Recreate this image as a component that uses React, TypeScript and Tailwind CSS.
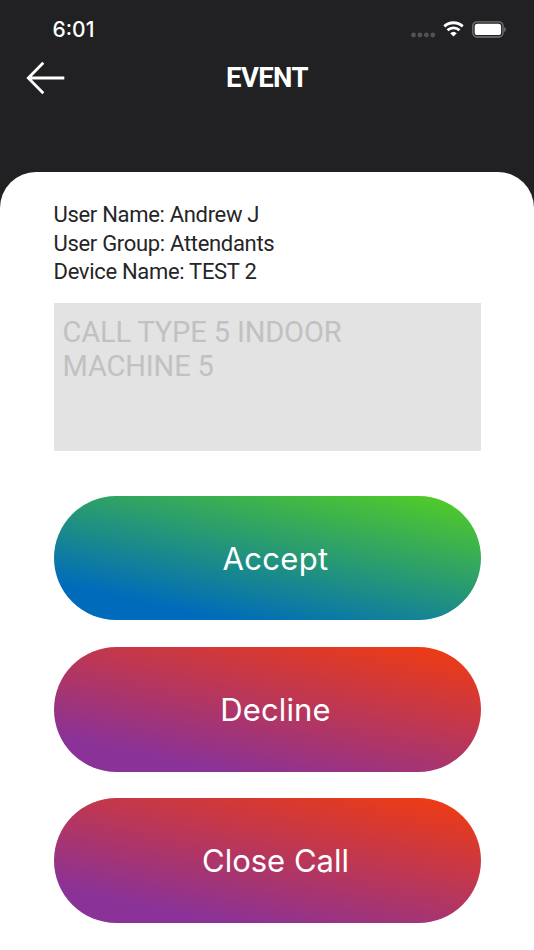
const details = [
  { label: "User Name", value: "Andrew J" },
  { label: "User Group", value: "Attendants" },
  { label: "Device Name", value: "TEST 2" },
];

const CALL_BG =
  "bg-[linear-gradient(12deg,#8a3297_17%,#eb3b17_93%)]";

const actions = [
  {
    label: "Accept",
    bg: "bg-[linear-gradient(12deg,#006bbb_17%,#4fc82c_93%)]",
    text: "tracking-[0.3px]",
  },
  { label: "Decline", bg: CALL_BG, text: "tracking-[0.1px]" },
  { label: "Close Call", bg: CALL_BG, text: "tracking-[0px]" },
];

function StatusBar() {
  return (
    <div className="flex h-[58px] items-center justify-between pl-[52.5px] pr-[27px] text-white">
      <span className="pt-px text-[21px] font-medium leading-none">6:01</span>
      <div className="flex items-center">
        <svg width="26" height="6" viewBox="0 0 26 6" className="mt-[11px]" fill="#525254">
          <circle cx="2.5" cy="3" r="2.4" />
          <circle cx="8.9" cy="3" r="2.4" />
          <circle cx="15.4" cy="3" r="2.4" />
          <circle cx="21.8" cy="3" r="2.4" />
        </svg>
        <svg width="21" height="16" viewBox="0 0 20 16" className="ml-[6px]" fill="none" stroke="white">
          <path d="M.8 5.3C6 .6 14 .6 19.2 5.3" strokeWidth="2.9" />
          <path d="M4 9.2C7.4 6 12.6 6 16 9.2" strokeWidth="2.8" />
          <path d="M6.7 12.3Q10 9.1 13.3 12.3L10 15.6Z" fill="white" stroke="none" />
        </svg>
        <svg width="35" height="17" viewBox="0 0 35 17" className="ml-[8px]">
          <rect x="0.8" y="0.8" width="30.2" height="15.2" rx="4.2" fill="none" stroke="#77777a" strokeWidth="1.3" />
          <rect x="2.7" y="2.7" width="26.4" height="11.4" rx="2.6" fill="white" />
          <path d="M32.2 6v5c2.1-.8 2.1-4.2 0-5Z" fill="#77777a" />
        </svg>
      </div>
    </div>
  );
}

export default function App() {
  return (
    <div className="flex h-[950px] w-[534px] flex-col overflow-hidden bg-[#212123] font-['Inter',sans-serif]">
      <StatusBar />

      <header className="grid h-[114px] grid-cols-[100px_1fr_100px] items-start">
        <button aria-label="Back" className="pl-[26px] pt-[3px]">
          <svg width="40" height="34" viewBox="0 0 40 34" fill="none" stroke="white" strokeWidth="2.8">
            <path d="M17.3 1.8 2.3 17l15 15.2M2.3 17h36" />
          </svg>
        </button>
        <h1 className="pt-[4px] text-center font-['Roboto',sans-serif] text-[27.5px] font-bold leading-[32px] tracking-[-0.6px] text-white">
          EVENT
        </h1>
      </header>

      <main className="flex-1 rounded-t-[36px] bg-white px-[53.5px] pt-[29px]">
        <div className="font-['Roboto',sans-serif] text-[22px] leading-[28.7px] tracking-[-0.31px] text-[#252527]">
          {details.map((item) => (
            <p key={item.label}>
              {item.label}: {item.value}
            </p>
          ))}
        </div>

        <div className="mt-[16px] h-[148px] bg-[#e3e3e3] px-[9px] pt-[13px] font-['Roboto',sans-serif] text-[29px] leading-[33.7px] tracking-[-0.14px] text-[#c1c1c1]">
          <p className="w-[300px]">CALL TYPE 5 INDOOR MACHINE 5</p>
        </div>

        <div className="mt-[45px] flex flex-col gap-[26.8px]">
          {actions.map((action) => (
            <button
              key={action.label}
              className={`flex h-[124.3px] items-center justify-center rounded-full pl-[17px] pt-[2px] text-[31px] text-white ${action.bg}`}
            >
              <span className={action.text}>{action.label}</span>
            </button>
          ))}
        </div>
      </main>
    </div>
  );
}
